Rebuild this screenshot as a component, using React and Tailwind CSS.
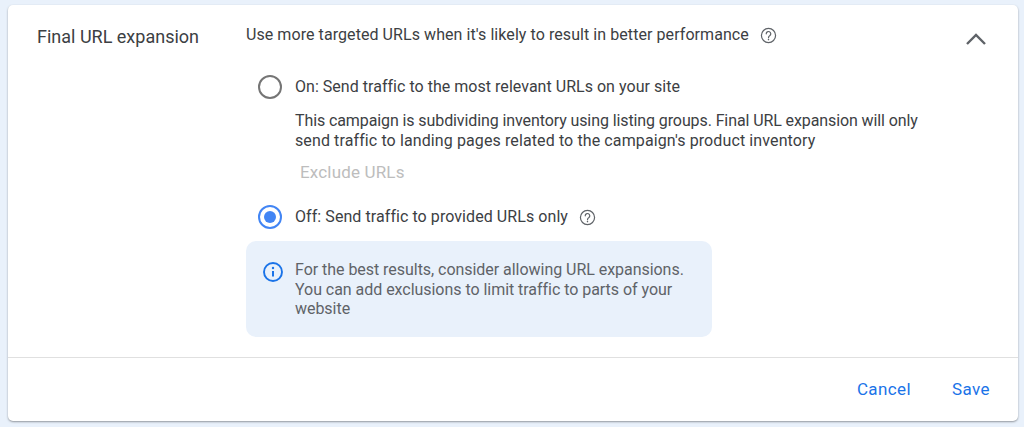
import React from "react";

const Help = ({ className }) => (
  <svg viewBox="0 0 24 24" className={className} fill="none" stroke="#5f6368" strokeWidth="1.7">
    <circle cx="12" cy="12" r="10" />
    <path d="M8.8 9.6a3.2 3.2 0 1 1 5.2 2.5c-1.2.9-2 1.5-2 3" strokeLinecap="round" />
    <circle cx="12" cy="17.8" r="1.1" fill="#5f6368" stroke="none" />
  </svg>
);

export default function App() {
  return (
    <div className="w-[1024px] h-[427px] overflow-hidden bg-[#e9f1fb] pt-[5px] pl-2 font-['Roboto',sans-serif]">
      <div className="w-[1010px] h-[416px] bg-white rounded-[5px] shadow-[0_1px_2px_rgba(60,64,67,0.5)] flex flex-col">
        <div className="h-[352px] flex pt-5 pl-[29px] pr-[30px]">
          <div className="w-[209px] text-[18px] leading-6 text-[#3c4043]">Final URL expansion</div>
          <div className="flex-1 flex flex-col">
            <div className="flex items-center h-[20px] text-[16px] text-[#3c4043] tracking-[0.07px]">
              <span>Use more targeted URLs when it's likely to result in better performance</span>
              <Help className="w-[17px] h-[17px] ml-[11px]" />
              <svg viewBox="0 0 24 24" className="w-[24px] h-[24px] ml-auto mt-[8px]" fill="none" stroke="#5f6368" strokeWidth="2.4">
                <path d="M3 17 12 8l9 9" />
              </svg>
            </div>
            <div className="flex items-center mt-[30px] ml-3 h-6">
              <span className="w-6 h-6 rounded-full border-[2.5px] border-[#757575]" />
              <span className="ml-[13px] text-[16px] text-[#3c4043] tracking-[0.03px]">On: Send traffic to the most relevant URLs on your site</span>
            </div>
            <p className="ml-[49px] mt-[12px] text-[16px] leading-[20px] text-[#3c4043] w-[640px]">
              <span className="block tracking-[-0.1px]">This campaign is subdividing inventory using listing groups. Final URL expansion will only</span>
              <span className="block tracking-[0.11px]">send traffic to landing pages related to the campaign's product inventory</span>
            </p>
            <div className="ml-[54px] mt-[11px] text-[17px] leading-5 text-[#bdbdbd] tracking-[0.17px]">Exclude URLs</div>
            <div className="flex items-center mt-[23px] ml-3 h-6">
              <span className="w-6 h-6 rounded-full border-[2.5px] border-[#4285f4] flex items-center justify-center">
                <span className="w-[12px] h-[12px] rounded-full bg-[#4285f4]" />
              </span>
              <span className="ml-[13px] text-[16px] text-[#3c4043] tracking-[0.07px]">Off: Send traffic to provided URLs only</span>
              <Help className="w-[17px] h-[17px] ml-[11px]" />
            </div>
            <div className="mt-[12px] w-[466px] h-[96px] rounded-[10px] bg-[#e9f1fb] flex pt-[19px] pl-[17px]">
              <svg viewBox="0 0 20 20" className="w-5 h-5 mt-[2px] shrink-0" fill="none" stroke="#1a73e8" strokeWidth="1.9">
                <circle cx="10" cy="10" r="9" />
                <path d="M10 9v5.5" strokeWidth="2" />
                <circle cx="10" cy="6" r="1.2" fill="#1a73e8" stroke="none" />
              </svg>
              <p className="ml-[12px] text-[16px] leading-[19.5px] text-[#5f6368] tracking-[-0.04px] w-[400px]">
                For the best results, consider allowing URL expansions. You can add exclusions to limit traffic to parts of your website
              </p>
            </div>
          </div>
        </div>
        <div className="flex-1 border-t border-[#e0e0e0] flex items-center justify-end pr-[28px] pt-[1px] gap-[41px] text-[17px] font-[450] text-[#1a73e8] tracking-[0.4px]">
          <span>Cancel</span>
          <span>Save</span>
        </div>
      </div>
    </div>
  );
}
